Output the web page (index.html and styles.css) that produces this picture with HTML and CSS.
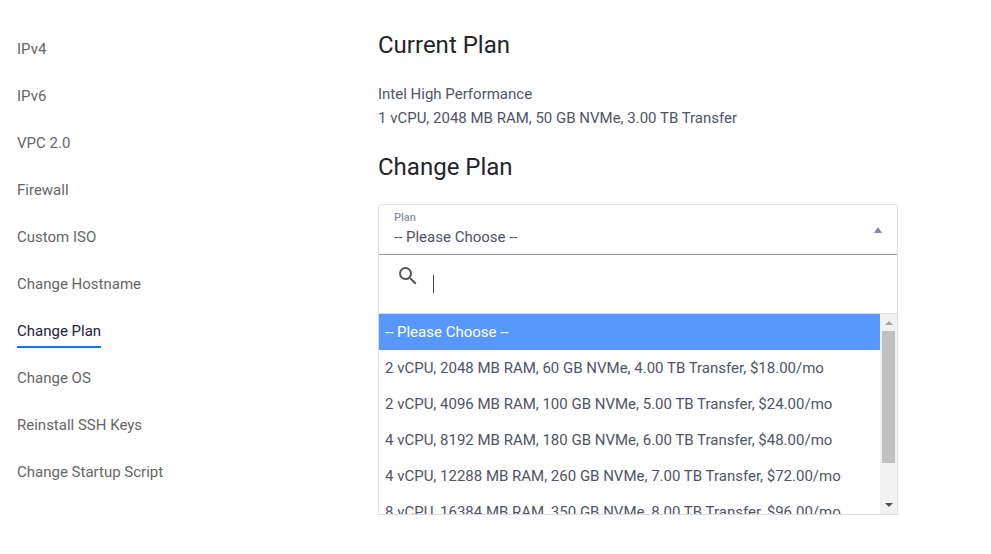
FILE: index.html
```html
<!DOCTYPE html>
<html lang="en">

<head>
  <meta charset="UTF-8" />
  <title>Change Plan</title>
  <link rel="stylesheet" href="styles.css">
</head>

<body>
  <div class="page">
    <ul class="side-nav">
      <li><a href="#">IPv4</a></li>
      <li><a href="#">IPv6</a></li>
      <li><a href="#">VPC 2.0</a></li>
      <li><a href="#">Firewall</a></li>
      <li><a href="#">Custom ISO</a></li>
      <li><a href="#">Change Hostname</a></li>
      <li><a href="#" class="active">Change Plan</a></li>
      <li><a href="#">Change OS</a></li>
      <li><a href="#">Reinstall SSH Keys</a></li>
      <li><a href="#">Change Startup Script</a></li>
    </ul>

    <div class="content">
      <h2>Current Plan</h2>
      <p class="plan-info">Intel High Performance<br>1 vCPU, 2048 MB RAM, 50 GB NVMe, 3.00 TB Transfer</p>
      <h2>Change Plan</h2>

      <div class="select-box">
        <div class="select-head">
          <div>
            <div class="select-label">Plan</div>
            <div class="select-value">-- Please Choose --</div>
          </div>
          <span class="select-arrow"></span>
        </div>
        <div class="search-row">
          <svg class="search-icon" width="24" height="24" viewBox="0 0 24 24" fill="#555">
            <path d="M15.5 14h-.79l-.28-.27A6.47 6.47 0 0 0 16 9.5 6.5 6.5 0 1 0 9.5 16c1.61 0 3.09-.59 4.23-1.57l.27.28v.79l5 4.99L20.49 19l-4.99-5zm-6 0C7.01 14 5 11.99 5 9.5S7.01 5 9.5 5 14 7.01 14 9.5 11.99 14 9.5 14z" />
          </svg>
          <span class="caret"></span>
        </div>
        <div class="options-wrap">
          <ul class="options">
            <li class="selected">-- Please Choose --</li>
            <li>2 vCPU, 2048 MB RAM, 60 GB NVMe, 4.00 TB Transfer, $18.00/mo</li>
            <li>2 vCPU, 4096 MB RAM, 100 GB NVMe, 5.00 TB Transfer, $24.00/mo</li>
            <li>4 vCPU, 8192 MB RAM, 180 GB NVMe, 6.00 TB Transfer, $48.00/mo</li>
            <li>4 vCPU, 12288 MB RAM, 260 GB NVMe, 7.00 TB Transfer, $72.00/mo</li>
            <li>8 vCPU, 16384 MB RAM, 350 GB NVMe, 8.00 TB Transfer, $96.00/mo</li>
          </ul>
          <div class="scrollbar">
            <span class="sb-up"></span>
            <div class="sb-track"><div class="sb-thumb"></div></div>
            <span class="sb-down"></span>
          </div>
        </div>
      </div>
    </div>
  </div>
</body>

</html>
```

FILE: styles.css
```css
* {
  box-sizing: border-box;
}

html,
body {
  height: 100%;
}

body {
  margin: 0;
  background: #fff;
  color: #4f5467;
  font-family: Roboto, sans-serif;
  font-size: 15px;
  overflow: hidden;
}

.page {
  display: flex;
  padding-top: 25px;
}

.side-nav {
  list-style: none;
  margin: 0;
  padding: 0 0 0 17px;
  width: 378px;
  flex: none;
}

.side-nav li {
  height: 47px;
  padding-top: 15px;
}

.side-nav a {
  display: inline-block;
  color: #666;
  line-height: 18px;
  padding-bottom: 6px;
  text-decoration: none;
}

.side-nav a.active {
  color: #1c2340;
  border-bottom: 2px solid #007bff;
}

.content {
  width: 520px;
  padding-top: 6px;
}

h2 {
  margin: 0;
  color: #212529;
  font-size: 24px;
  font-weight: 400;
  line-height: 29px;
}

.plan-info {
  margin: 22px 0 23px;
  line-height: 24px;
}

.select-box {
  margin-top: 22px;
  height: 311px;
  border: 1px solid #ddd;
  border-top-color: #e2e2e2;
  border-radius: 4px 4px 0 0;
  display: flex;
  flex-direction: column;
}

.select-head {
  height: 50px;
  flex: none;
  display: flex;
  justify-content: space-between;
  padding: 7px 15px 0;
  border-bottom: 1px solid #999;
}

.select-label {
  color: #8a8fb0;
  font-size: 11px;
  font-weight: 500;
  line-height: 12px;
}

.select-value {
  margin-top: 3px;
  line-height: 20px;
}

.select-arrow {
  width: 0;
  height: 0;
  margin: 15px 0 0;
  border-left: 4px solid transparent;
  border-right: 4px solid transparent;
  border-bottom: 6px solid #8288a8;
}

.search-row {
  height: 59px;
  flex: none;
  display: flex;
  align-items: flex-start;
  border-bottom: 1px solid #ddd;
}

.search-icon {
  margin: 9px 0 0 17px;
}

.caret {
  width: 1px;
  height: 18px;
  margin: 20px 0 0 13px;
  background: #444;
}

.options-wrap {
  flex: 1;
  min-height: 0;
  display: flex;
}

.options {
  list-style: none;
  margin: 0;
  padding: 0;
  flex: 1;
  overflow: hidden;
}

.options li {
  height: 36px;
  line-height: 36px;
  padding-left: 6px;
  white-space: nowrap;
}

.options li.selected {
  background: #5897fb;
  color: #fff;
}

.scrollbar {
  width: 17px;
  flex: none;
  background: #f1f1f1;
  display: flex;
  flex-direction: column;
  align-items: center;
}

.sb-track {
  flex: 1;
  width: 100%;
  padding: 0 2px;
}

.sb-thumb {
  height: 132px;
  background: #c1c1c1;
}

.sb-up,
.sb-down {
  width: 0;
  height: 0;
  flex: none;
  border-left: 4px solid transparent;
  border-right: 4px solid transparent;
}

.sb-up {
  margin: 7px 0 6px;
  border-bottom: 4px solid #a3a3a3;
}

.sb-down {
  margin: 6px 0 7px;
  border-top: 4px solid #505050;
}
```
